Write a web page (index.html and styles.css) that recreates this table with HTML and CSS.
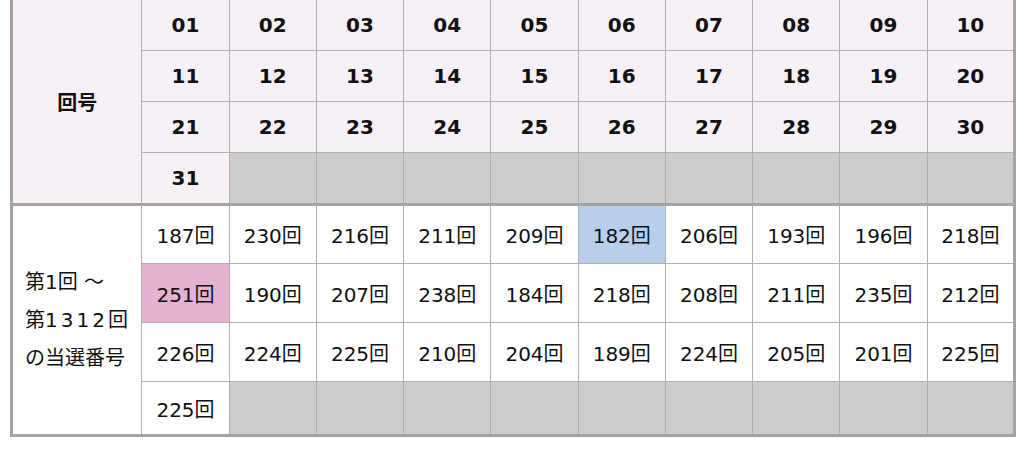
FILE: index.html
```html
<!DOCTYPE html>
<html lang="ja">
<head>
<meta charset="utf-8">
<link rel="stylesheet" href="styles.css">
</head>
<body>
<table class="tbl">
  <colgroup>
    <col class="c-head">
    <col span="10" class="c-num">
  </colgroup>
  <thead>
    <tr class="hr">
      <th rowspan="4" class="label">回号</th>
      <th>01</th><th>02</th><th>03</th><th>04</th><th>05</th><th>06</th><th>07</th><th>08</th><th>09</th><th>10</th>
    </tr>
    <tr class="hr">
      <th>11</th><th>12</th><th>13</th><th>14</th><th>15</th><th>16</th><th>17</th><th>18</th><th>19</th><th>20</th>
    </tr>
    <tr class="hr">
      <th>21</th><th>22</th><th>23</th><th>24</th><th>25</th><th>26</th><th>27</th><th>28</th><th>29</th><th>30</th>
    </tr>
    <tr class="hr">
      <th>31</th><th class="empty"></th><th class="empty"></th><th class="empty"></th><th class="empty"></th><th class="empty"></th><th class="empty"></th><th class="empty"></th><th class="empty"></th><th class="empty"></th>
    </tr>
  </thead>
  <tbody>
    <tr class="r1">
      <td rowspan="4" class="desc">第1回 〜<br>第<span class="wide">1312</span>回<br>の当選番号</td>
      <td>187回</td><td>230回</td><td>216回</td><td>211回</td><td>209回</td><td class="min">182回</td><td>206回</td><td>193回</td><td>196回</td><td>218回</td>
    </tr>
    <tr class="r2">
      <td class="max">251回</td><td>190回</td><td>207回</td><td>238回</td><td>184回</td><td>218回</td><td>208回</td><td>211回</td><td>235回</td><td>212回</td>
    </tr>
    <tr class="r3">
      <td>226回</td><td>224回</td><td>225回</td><td>210回</td><td>204回</td><td>189回</td><td>224回</td><td>205回</td><td>201回</td><td>225回</td>
    </tr>
    <tr class="r4">
      <td>225回</td><td class="empty"></td><td class="empty"></td><td class="empty"></td><td class="empty"></td><td class="empty"></td><td class="empty"></td><td class="empty"></td><td class="empty"></td><td class="empty"></td>
    </tr>
  </tbody>
</table>
</body>
</html>
```
FILE: styles.css
```css
html, body {
  margin: 0;
  padding: 0;
  background: #ffffff;
}
body {
  padding-left: 10px;
  font-family: "DejaVu Sans", "Noto Sans CJK JP", sans-serif;
  color: #111;
}
.tbl {
  margin-top: -3px;
  border-collapse: collapse;
  table-layout: fixed;
  width: 1006px;
  border: 3px solid #a3a3a3;
}
.c-head { width: 130px; }
.c-num { width: 87px; }
.tbl th, .tbl td {
  border: 1px solid #b0b0b0;
  padding: 0;
  text-align: center;
  vertical-align: middle;
}
.tbl th {
  background: #f7f0f7;
  font-size: 20px;
  font-weight: 700;
  height: 50px;
}
.tbl th.label {
  font-family: "Noto Sans CJK JP", sans-serif;
  font-size: 20px;
}
.tbl td {
  font-size: 20px;
  font-weight: 400;
  background: #fff;
}
.tbl tbody tr.r1 td { border-top: 3px solid #a3a3a3; }
.tbl tr.r1 td { height: 57px; }
.tbl tr.r2 td { height: 58px; }
.tbl tr.r3 td { height: 58px; }
.tbl tr.r4 td { height: 52px; }
.tbl td.desc {
  text-align: left;
  padding-left: 12px;
  line-height: 38px;
  font-size: 20px;
}
.tbl td.desc .wide {
  letter-spacing: 3px;
}
.tbl .empty { background: #cccccc; }
.tbl td.min { background: #b8cfea; }
.tbl td.max { background: #e5b2cf; }
```
